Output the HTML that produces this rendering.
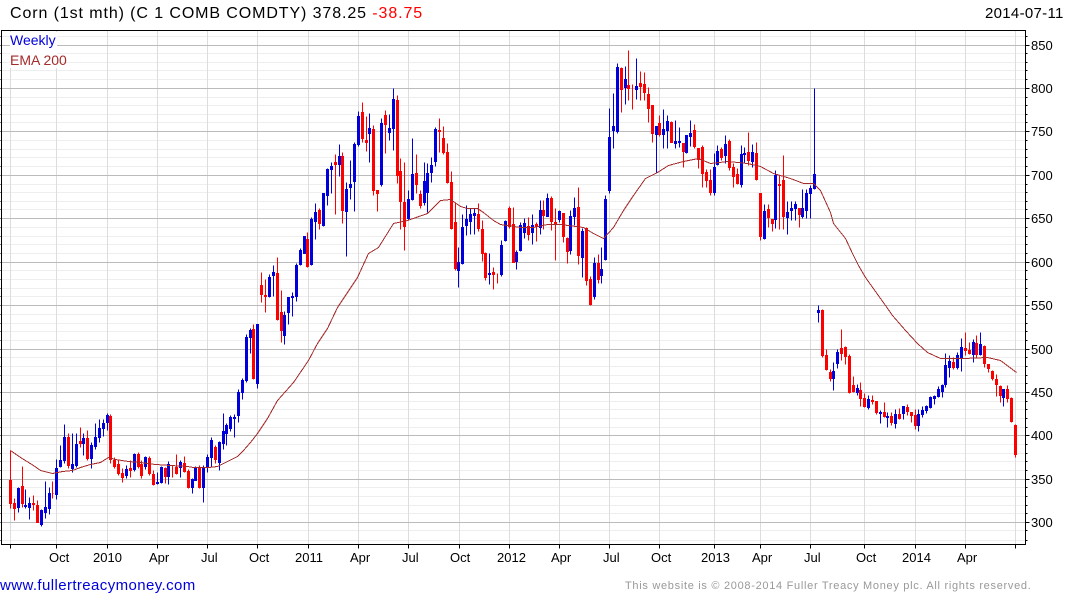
<!DOCTYPE html>
<html><head><meta charset="utf-8"><title>Corn</title>
<style>
html,body{margin:0;padding:0;background:#fff;width:1075px;height:600px;overflow:hidden}
body{position:relative;font-family:"Liberation Sans",sans-serif}
svg{position:absolute;left:0;top:0}
svg path,svg polyline{shape-rendering:crispEdges}
.b{fill:#0000dd;stroke:#0000dd}.r{fill:#f00;stroke:#f00}
text{font-family:"Liberation Sans",sans-serif}
.t{position:absolute;white-space:nowrap;line-height:1}
</style></head><body>
<svg width="1075" height="600" viewBox="0 0 1075 600">
<g transform="translate(.5 .5)" fill="none">
<path stroke="#eee" d="M1 36H1025M1 53H1025M1 62H1025M1 70H1025M1 79H1025M1 97H1025M1 105H1025M1 114H1025M1 122H1025M1 140H1025M1 149H1025M1 157H1025M1 166H1025M1 184H1025M1 192H1025M1 201H1025M1 209H1025M1 227H1025M1 236H1025M1 244H1025M1 253H1025M1 270H1025M1 279H1025M1 288H1025M1 296H1025M1 314H1025M1 323H1025M1 331H1025M1 340H1025M1 357H1025M1 366H1025M1 375H1025M1 383H1025M1 401H1025M1 409H1025M1 418H1025M1 427H1025M1 444H1025M1 453H1025M1 461H1025M1 470H1025M1 487H1025M1 496H1025M1 505H1025M1 513H1025M1 530H1025M1 540H1025"/>
<path stroke="#ddd" d="M10 30V544M56 30V544M107 30V544M157 30V544M207 30V544M257 30V544M308 30V544M358 30V544M408 30V544M459 30V544M509 30V544M559 30V544M609 30V544M659 30V544M714 30V544M760 30V544M810 30V544M864 30V544M915 30V544M965 30V544M1015 30V544"/>
<path stroke="#bbb" d="M1 45H1025M1 88H1025M1 131H1025M1 175H1025M1 218H1025M1 262H1025M1 305H1025M1 349H1025M1 392H1025M1 435H1025M1 479H1025M1 522H1025"/>
</g>
<rect x="10" y="32" width="47" height="36" fill="#fff"/>
<g transform="translate(.5 .5)">
<path class="r" d="M10 450V508M9 480h2v23h-2zM14 498V520M13 503h2v5h-2z"/>
<path class="b" d="M18 487V512M17 488h2v19h-2z"/>
<path class="r" d="M22 466V507M21 486h2v17h-2z"/>
<path class="b" d="M25 489V508M24 505h2v1h-2zM29 497V519M28 503h2v4h-2z"/>
<path class="r" d="M33 495V510M32 503h2v1h-2zM37 500V522M36 505h2v17h-2z"/>
<path class="b" d="M41 509V526M40 510h2v14h-2zM45 481V518M44 507h2v5h-2zM49 487V514M48 493h2v15h-2z"/>
<path class="r" d="M52 481V498M52 493h1"/>
<path class="b" d="M56 459V499M55 468h2v26h-2zM60 445V467M59 460h2v6h-2zM64 424V463M63 437h2v23h-2z"/>
<path class="r" d="M68 433V468M67 437h2v28h-2z"/>
<path class="b" d="M72 433V472M71 464h2v4h-2zM76 433V467M75 444h2v21h-2z"/>
<path class="r" d="M80 427V447M79 441h2v2h-2z"/>
<path class="b" d="M83 433V455M82 438h2v5h-2z"/>
<path class="r" d="M87 430V460M86 438h2v20h-2z"/>
<path class="b" d="M91 442V468M90 445h2v13h-2zM95 423V449M94 437h2v9h-2zM99 419V442M98 428h2v9h-2zM103 419V436M102 423h2v5h-2zM107 413V430M106 415h2v7h-2z"/>
<path class="r" d="M110 414V463M109 416h2v43h-2zM114 457V468M113 460h2v6h-2zM118 460V475M117 464h2v9h-2zM122 468V482M121 473h2v4h-2z"/>
<path class="b" d="M126 465V478M125 469h2v6h-2z"/>
<path class="r" d="M130 460V477M129 468h2v2h-2z"/>
<path class="b" d="M134 453V471M133 454h2v15h-2z"/>
<path class="r" d="M138 452V468M137 454h2v12h-2zM141 460V478M140 464h2v11h-2z"/>
<path class="b" d="M145 456V469M144 457h2v9h-2z"/>
<path class="r" d="M149 456V475M148 458h2v15h-2zM153 470V485M152 474h2v10h-2z"/>
<path class="b" d="M157 472V484M156 482h2v1h-2zM161 466V483M160 467h2v15h-2z"/>
<path class="r" d="M165 467V483M164 468h2v8h-2z"/>
<path class="b" d="M168 461V484M167 464h2v12h-2z"/>
<path class="r" d="M172 465V477M176 454V474M175 467h2v6h-2z"/>
<path class="b" d="M180 460V477M179 462h2v5h-2z"/>
<path class="r" d="M184 456V472M183 463h2v8h-2zM188 469V488M187 471h2v16h-2z"/>
<path class="b" d="M192 478V493M191 479h2v8h-2zM195 466V480M194 468h2v12h-2z"/>
<path class="r" d="M199 465V488M198 467h2v20h-2z"/>
<path class="b" d="M203 465V502M202 468h2v19h-2zM207 454V472M206 457h2v10h-2zM211 437V467M210 440h2v17h-2z"/>
<path class="r" d="M215 445V463M214 447h2v12h-2z"/>
<path class="b" d="M219 441V470M218 442h2v20h-2zM223 413V449M222 431h2v12h-2zM226 423V445M225 425h2v8h-2zM230 415V431M229 417h2v11h-2zM234 414V437M233 417h2v1h-2zM238 389V422M237 392h2v23h-2zM242 378V399M241 380h2v12h-2zM246 334V382M245 337h2v43h-2zM250 328V353M249 330h2v7h-2z"/>
<path class="r" d="M253 324V379M252 329h2v49h-2z"/>
<path class="b" d="M257 324V388M256 324h2v59h-2z"/>
<path class="r" d="M261 272V302M260 285h2v9h-2zM265 279V312M264 295h2v1h-2z"/>
<path class="b" d="M269 274V297M268 277h2v19h-2zM273 265V296M272 272h2v3h-2z"/>
<path class="r" d="M277 257V320M276 273h2v46h-2zM281 290V342M280 312h2v18h-2z"/>
<path class="b" d="M284 311V344M283 315h2v20h-2zM288 297V324M287 297h2v15h-2zM292 292V316M291 296h2v1h-2zM296 263V301M295 265h2v31h-2zM300 248V265M299 250h2v14h-2zM304 236V253M303 236h2v17h-2z"/>
<path class="r" d="M307 232V267M306 239h2v27h-2z"/>
<path class="b" d="M311 217V265M310 219h2v45h-2zM315 203V239M314 212h2v9h-2z"/>
<path class="r" d="M319 208V229M318 210h2v13h-2z"/>
<path class="b" d="M323 193V226M322 193h2v32h-2zM327 168V205M326 169h2v26h-2zM331 162V193M330 166h2v3h-2z"/>
<path class="r" d="M335 154V214M334 162h2v2h-2z"/>
<path class="b" d="M339 144V176M338 156h2v8h-2z"/>
<path class="r" d="M342 152V223M341 156h2v54h-2z"/>
<path class="b" d="M346 182V256M345 189h2v22h-2zM350 160V199M349 184h2v3h-2zM354 142V211M353 144h2v37h-2zM358 111V146M357 116h2v28h-2z"/>
<path class="r" d="M362 102V142M361 112h2v26h-2zM366 116V151M365 140h2v2h-2z"/>
<path class="b" d="M369 113V162M368 128h2v5h-2z"/>
<path class="r" d="M373 125V195M372 129h2v61h-2zM377 190V211M376 190h2v3h-2z"/>
<path class="b" d="M381 118V186M380 123h2v61h-2z"/>
<path class="r" d="M385 110V153M384 115h2v9h-2z"/>
<path class="b" d="M389 114V140M388 128h2v4h-2zM393 88V150M392 99h2v29h-2z"/>
<path class="r" d="M397 95V183M396 100h2v75h-2zM400 158V229M399 171h2v30h-2zM404 162V250M403 202h2v24h-2z"/>
<path class="b" d="M408 190V220M407 199h2v19h-2zM412 138V200M411 174h2v25h-2z"/>
<path class="r" d="M416 154V193M415 173h2v11h-2zM420 190V208M419 194h2v11h-2z"/>
<path class="b" d="M424 162V205M423 181h2v21h-2zM427 163V212M426 173h2v19h-2zM431 157V182M430 165h2v7h-2zM435 127V166M434 129h2v32h-2z"/>
<path class="r" d="M439 118V152M438 130h2v1h-2zM443 126V154M442 138h2v14h-2zM447 143V183M446 152h2v30h-2zM451 171V229M450 182h2v46h-2zM455 203V270M454 222h2v46h-2z"/>
<path class="b" d="M458 247V287M457 262h2v8h-2zM462 214V264M461 227h2v36h-2zM466 205V235M465 219h2v6h-2zM470 208V234M469 214h2v7h-2zM474 208V234M473 213h2v2h-2z"/>
<path class="r" d="M478 203V231M477 214h2v14h-2zM482 220V261M481 229h2v24h-2zM485 252V280M484 253h2v24h-2z"/>
<path class="b" d="M489 253V284M488 273h2v1h-2z"/>
<path class="r" d="M493 267V289M492 272h2v2h-2zM497 273V283"/>
<path class="b" d="M501 240V276M500 245h2v29h-2zM505 220V241M504 221h2v19h-2z"/>
<path class="r" d="M509 206V228M508 208h2v18h-2zM513 207V262M512 224h2v38h-2z"/>
<path class="b" d="M516 250V269M515 252h2v9h-2zM520 222V251M519 225h2v25h-2zM524 218V238M523 223h2v9h-2z"/>
<path class="r" d="M528 217V240M527 226h2v8h-2z"/>
<path class="b" d="M532 214V244M531 225h2v7h-2z"/>
<path class="r" d="M536 222V241M535 224h2v2h-2z"/>
<path class="b" d="M540 200V234M539 210h2v17h-2z"/>
<path class="r" d="M543 200V229M542 210h2v5h-2z"/>
<path class="b" d="M547 193V216M546 198h2v18h-2z"/>
<path class="r" d="M551 196V230M550 198h2v23h-2zM555 208V260M554 222h2v1h-2z"/>
<path class="b" d="M559 210V222M558 211h2v8h-2z"/>
<path class="r" d="M563 213V242M562 213h2v23h-2zM567 237V263M566 238h2v13h-2z"/>
<path class="b" d="M570 210V254M569 216h2v34h-2zM574 197V225M573 208h2v8h-2z"/>
<path class="r" d="M578 187V264M577 207h2v48h-2z"/>
<path class="b" d="M582 228V277M581 231h2v26h-2z"/>
<path class="r" d="M586 227V285M585 228h2v52h-2zM590 276V305M589 279h2v25h-2z"/>
<path class="b" d="M594 257V299M593 263h2v33h-2z"/>
<path class="r" d="M598 254V283M597 263h2v16h-2z"/>
<path class="b" d="M601 247V283M600 269h2v6h-2zM605 195V260M604 199h2v60h-2zM609 108V193M608 137h2v53h-2zM613 93V148M612 126h2v4h-2zM617 63V133M616 67h2v64h-2z"/>
<path class="r" d="M621 67V112M620 68h2v21h-2z"/>
<path class="b" d="M625 66V104M624 79h2v8h-2z"/>
<path class="r" d="M628 50V100M627 85h2v3h-2zM632 84V109"/>
<path class="b" d="M636 58V99M635 86h2v3h-2z"/>
<path class="r" d="M640 71V100M639 83h2v3h-2zM644 72V100M643 84h2v8h-2zM648 87V122M647 94h2v14h-2zM652 105V142M651 105h2v28h-2z"/>
<path class="b" d="M656 126V172M655 126h2v8h-2z"/>
<path class="r" d="M659 115V136M658 123h2v11h-2z"/>
<path class="b" d="M663 109V148M662 129h2v5h-2zM667 115V148M666 121h2v9h-2z"/>
<path class="r" d="M671 121V142M670 122h2v20h-2z"/>
<path class="b" d="M675 120V148M674 141h2v2h-2zM679 127V147M678 141h2v1h-2z"/>
<path class="r" d="M683 143V167M682 143h2v8h-2z"/>
<path class="b" d="M686 135V153M685 135h2v17h-2zM690 120V146M689 133h2v3h-2z"/>
<path class="r" d="M694 124V148M693 130h2v16h-2zM698 148V168M697 148h2v11h-2zM702 145V187M701 147h2v26h-2zM706 169V187M705 172h2v8h-2zM710 169V195M709 180h2v12h-2z"/>
<path class="b" d="M714 153V195M713 167h2v25h-2zM717 145V165M716 151h2v13h-2z"/>
<path class="r" d="M721 147V160M720 149h2v8h-2z"/>
<path class="b" d="M725 135V163M724 144h2v11h-2z"/>
<path class="r" d="M729 139V170M728 141h2v26h-2zM733 163V187M732 167h2v9h-2zM737 168V184M736 174h2v9h-2z"/>
<path class="b" d="M741 145V187M740 154h2v30h-2zM744 147V163M743 153h2v1h-2z"/>
<path class="r" d="M748 132V165M747 152h2v8h-2z"/>
<path class="b" d="M752 144V167M751 152h2v9h-2z"/>
<path class="r" d="M756 142V180M755 153h2v26h-2zM760 193V240M759 193h2v43h-2z"/>
<path class="b" d="M764 204V239M763 211h2v27h-2z"/>
<path class="r" d="M768 204V227M767 209h2v8h-2zM772 219V231M771 219h2v4h-2z"/>
<path class="b" d="M775 170V228M774 175h2v44h-2z"/>
<path class="r" d="M779 175V229M778 184h2v1h-2zM783 155V229M782 180h2v36h-2z"/>
<path class="b" d="M787 201V234M786 212h2v5h-2zM791 201V220M790 208h2v2h-2zM795 201V220M794 204h2v4h-2z"/>
<path class="r" d="M799 208V227M798 208h2v6h-2z"/>
<path class="b" d="M802 189V218M801 208h2v8h-2zM806 189V218M805 193h2v17h-2zM810 185V218M809 188h2v5h-2zM814 88V189M813 174h2v14h-2zM818 305V322M817 310h2v2h-2z"/>
<path class="r" d="M822 309V357M821 310h2v45h-2zM826 349V370M825 355h2v14h-2zM830 369V381M829 372h2v6h-2z"/>
<path class="b" d="M833 362V390M832 371h2v7h-2zM837 349V368M836 352h2v11h-2z"/>
<path class="r" d="M841 329V360M840 348h2v5h-2zM845 346V364M844 347h2v9h-2zM849 354V393M848 356h2v36h-2zM853 376V392M852 385h2v6h-2z"/>
<path class="b" d="M857 384V395M856 388h2v4h-2z"/>
<path class="r" d="M860 382V406M859 390h2v8h-2zM864 393V407M863 398h2v8h-2z"/>
<path class="b" d="M868 395V409M867 399h2v8h-2z"/>
<path class="r" d="M872 395V404M871 400h2v1h-2zM876 401V414M875 401h2v11h-2z"/>
<path class="b" d="M880 410V423M879 412h2v1h-2z"/>
<path class="r" d="M884 402V417M883 412h2v4h-2z"/>
<path class="b" d="M887 412V427M886 416h2v1h-2z"/>
<path class="r" d="M891 412V425M890 416h2v6h-2z"/>
<path class="b" d="M895 409V428M894 414h2v9h-2z"/>
<path class="r" d="M899 408V419M898 414h2v4h-2z"/>
<path class="b" d="M903 406V419M902 406h2v7h-2z"/>
<path class="r" d="M907 404V415M906 407h2v4h-2zM911 412V422M910 412h2v3h-2zM915 409V429M914 415h2v10h-2z"/>
<path class="b" d="M918 409V431M917 414h2v11h-2zM922 406V417M921 410h2v4h-2zM926 405V413M925 406h2v4h-2zM930 396V408M929 397h2v10h-2zM934 395V404M933 396h2v2h-2zM938 386V397M937 389h2v7h-2zM942 384V397M941 385h2v6h-2zM945 353V387M944 365h2v19h-2zM949 355V377M948 361h2v6h-2z"/>
<path class="r" d="M953 357V369M952 362h2v5h-2z"/>
<path class="b" d="M957 352V369M956 355h2v12h-2zM961 338V371M960 347h2v10h-2z"/>
<path class="r" d="M965 332V355M964 348h2v2h-2zM969 342V354M968 350h2v3h-2z"/>
<path class="b" d="M973 339V362M972 342h2v12h-2z"/>
<path class="r" d="M976 335V357M975 343h2v11h-2z"/>
<path class="b" d="M980 332V355M979 344h2v10h-2z"/>
<path class="r" d="M984 345V367M983 346h2v17h-2zM988 364V372M987 364h2v4h-2zM992 370V380M991 371h2v7h-2zM996 374V396M995 379h2v5h-2zM1000 385V402M999 386h2v9h-2z"/>
<path class="b" d="M1003 389V406M1002 389h2v8h-2z"/>
<path class="r" d="M1007 385V402M1006 389h2v9h-2zM1011 397V422M1010 398h2v23h-2zM1015 424V457M1014 425h2v29h-2z"/>
<polyline fill="none" stroke="#a52a2a" points="10,450 20,457 33,465 40,470 52,473 62,471 72,470 80,467 90,464 100,462 108,457 115,459 128,461 140,462 155,464 170,465 187,466 193,467 208,467 217,466 227,461 237,456 243,450 250,442 257,433 267,418 277,400 293,382 308,360 317,343 327,328 337,307 347,292 357,277 368,253 378,247 393,223 407,220 427,213 440,200 450,199 460,206 467,208 477,208 483,212 493,220 500,224 520,227 533,227 547,224 560,224 583,227 593,233 603,238 613,227 623,210 633,195 645,178 657,172 668,165 683,161 698,158 710,163 728,161 747,163 760,166 773,173 790,178 803,183 813,183 820,190 830,212 833,223 845,238 852,253 858,265 865,277 885,305 892,315 905,330 917,343 927,352 940,358 963,358 987,357 1000,360 1016,372"/>
<path fill="none" stroke="#000" d="M0 36H1M0 45H1M0 53H1M0 62H1M0 70H1M0 79H1M0 88H1M0 97H1M0 105H1M0 114H1M0 122H1M0 131H1M0 140H1M0 149H1M0 157H1M0 166H1M0 175H1M0 184H1M0 192H1M0 201H1M0 209H1M0 218H1M0 227H1M0 236H1M0 244H1M0 253H1M0 262H1M0 270H1M0 279H1M0 288H1M0 296H1M0 305H1M0 314H1M0 323H1M0 331H1M0 340H1M0 349H1M0 357H1M0 366H1M0 375H1M0 383H1M0 392H1M0 401H1M0 409H1M0 418H1M0 427H1M0 435H1M0 444H1M0 453H1M0 461H1M0 470H1M0 479H1M0 487H1M0 496H1M0 505H1M0 513H1M0 522H1M0 530H1M0 540H1"/>
<path fill="none" stroke="#000" d="M1025 36h2M1025 45h4M1025 53h2M1025 62h2M1025 70h2M1025 79h2M1025 88h4M1025 97h2M1025 105h2M1025 114h2M1025 122h2M1025 131h4M1025 140h2M1025 149h2M1025 157h2M1025 166h2M1025 175h4M1025 184h2M1025 192h2M1025 201h2M1025 209h2M1025 218h4M1025 227h2M1025 236h2M1025 244h2M1025 253h2M1025 262h4M1025 270h2M1025 279h2M1025 288h2M1025 296h2M1025 305h4M1025 314h2M1025 323h2M1025 331h2M1025 340h2M1025 349h4M1025 357h2M1025 366h2M1025 375h2M1025 383h2M1025 392h4M1025 401h2M1025 409h2M1025 418h2M1025 427h2M1025 435h4M1025 444h2M1025 453h2M1025 461h2M1025 470h2M1025 479h4M1025 487h2M1025 496h2M1025 505h2M1025 513h2M1025 522h4M1025 530h2M1025 540h2"/>
<path fill="none" stroke="#000" d="M10 544v4M56 544v4M107 544v4M157 544v4M207 544v4M257 544v4M308 544v4M358 544v4M408 544v4M459 544v4M509 544v4M559 544v4M609 544v4M659 544v4M714 544v4M760 544v4M810 544v4M864 544v4M915 544v4M965 544v4M1015 544v4"/>
<path fill="none" stroke="#000" d="M1 30H1025V544H1Z"/>
</g>
</svg>
<div class="t" style="left:10px;top:6px;font-size:16px;letter-spacing:.9px;color:#000">Corn (1st mth) (C 1 COMB COMDTY) 378.25 <span style="color:#f00">-38.75</span></div>
<div class="t" style="left:985px;top:6px;font-size:15px;letter-spacing:.3px;color:#000">2014-07-11</div>
<div class="t" style="left:10px;top:33px;font-size:14px;color:#0000dd">Weekly</div>
<div class="t" style="left:10px;top:53px;font-size:14px;color:#a52a2a">EMA 200</div>
<div class="t" style="left:1031px;top:39px;font-size:13px">850</div>
<div class="t" style="left:1031px;top:82px;font-size:13px">800</div>
<div class="t" style="left:1031px;top:125px;font-size:13px">750</div>
<div class="t" style="left:1031px;top:169px;font-size:13px">700</div>
<div class="t" style="left:1031px;top:212px;font-size:13px">650</div>
<div class="t" style="left:1031px;top:256px;font-size:13px">600</div>
<div class="t" style="left:1031px;top:299px;font-size:13px">550</div>
<div class="t" style="left:1031px;top:343px;font-size:13px">500</div>
<div class="t" style="left:1031px;top:386px;font-size:13px">450</div>
<div class="t" style="left:1031px;top:429px;font-size:13px">400</div>
<div class="t" style="left:1031px;top:473px;font-size:13px">350</div>
<div class="t" style="left:1031px;top:516px;font-size:13px">300</div>
<div class="t" style="left:49px;top:551px;font-size:13px">Oct</div>
<div class="t" style="left:93px;top:551px;font-size:13px">2010</div>
<div class="t" style="left:149px;top:551px;font-size:13px">Apr</div>
<div class="t" style="left:201px;top:551px;font-size:13px">Jul</div>
<div class="t" style="left:249px;top:551px;font-size:13px">Oct</div>
<div class="t" style="left:295px;top:551px;font-size:13px">2011</div>
<div class="t" style="left:350px;top:551px;font-size:13px">Apr</div>
<div class="t" style="left:402px;top:551px;font-size:13px">Jul</div>
<div class="t" style="left:450px;top:551px;font-size:13px">Oct</div>
<div class="t" style="left:497px;top:551px;font-size:13px">2012</div>
<div class="t" style="left:551px;top:551px;font-size:13px">Apr</div>
<div class="t" style="left:603px;top:551px;font-size:13px">Jul</div>
<div class="t" style="left:651px;top:551px;font-size:13px">Oct</div>
<div class="t" style="left:701px;top:551px;font-size:13px">2013</div>
<div class="t" style="left:752px;top:551px;font-size:13px">Apr</div>
<div class="t" style="left:804px;top:551px;font-size:13px">Jul</div>
<div class="t" style="left:856px;top:551px;font-size:13px">Oct</div>
<div class="t" style="left:902px;top:551px;font-size:13px">2014</div>
<div class="t" style="left:957px;top:551px;font-size:13px">Apr</div>
<div class="t" style="left:0;top:578px;font-size:15px;letter-spacing:.4px;color:#0000dd">www.fullertreacymoney.com</div>
<div class="t" style="left:625px;top:581px;font-size:11px;color:#999;letter-spacing:.7px">This website is © 2008-2014 Fuller Treacy Money plc. All rights reserved.</div>
</body></html>
